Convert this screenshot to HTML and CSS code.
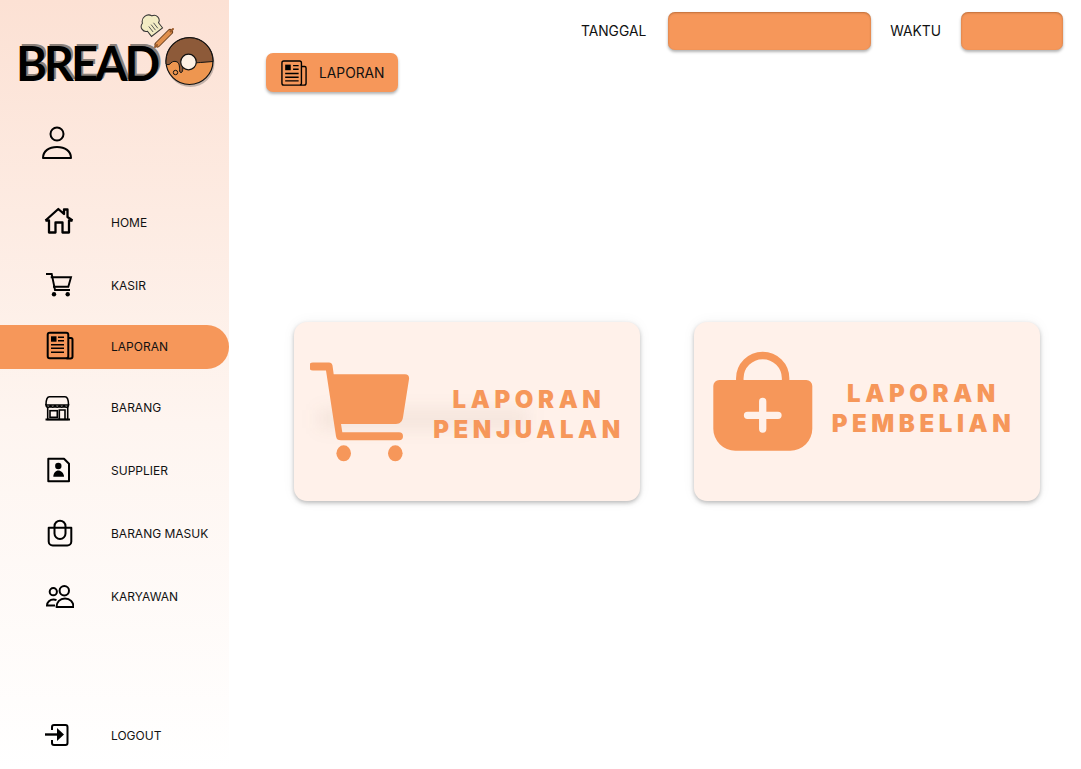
FILE: index.html
```html
<!DOCTYPE html>
<html lang="en">
<head>
  <meta charset="UTF-8">
  <meta name="viewport" content="width=device-width, initial-scale=1.0">
  <title>Bread - Laporan</title>
  <link rel="stylesheet" href="styles.css">
</head>
<body>
  <aside class="sidebar">
    <div class="logo">
      <span class="logo-text">BREAD</span>
      <svg class="logo-art" viewBox="0 0 80 80" width="80" height="80">
        <!-- chef hat + rolling pin -->
        <g transform="rotate(-38 13 16)">
          <path d="M6 16a5 5 0 0 1 1-9.500 6.500 6.500 0 0 1 12 0 5 5 0 0 1 1 9.500v6.500H6z" fill="#f3ecc4" stroke="#333" stroke-width="1"/>
          <path d="M10 13v7M13 13v7M16 13v7" stroke="#555" stroke-width=".9"/>
        </g>
        <path d="M17.500 33.500L30 21" stroke="#6b4020" stroke-width="6" stroke-linecap="round"/>
        <path d="M17.500 33.500L30 21" stroke="#e08f4c" stroke-width="4" stroke-linecap="round"/>
        <path d="M15 36l2-2M30.500 20.500l2.500-2.500" stroke="#9a5a2a" stroke-width="2" stroke-linecap="round"/>
        <!-- donut -->
        <circle cx="50.500" cy="52" r="24" fill="#000" opacity=".22"/>
        <circle cx="49.500" cy="50" r="23.500" fill="#ee9650" stroke="#111" stroke-width="1.200"/>
        <path d="M26 50a23.500 23.500 0 0 1 47 0.500l-10 .8c-4 .3-6 .3-9 1-3 .5-5-.3-7-.3-3 0-3.500 2-4 5-.3 2-.5 4-1.500 4.500-1.500.5-2-1-2-3 0-3 0-7-3.500-8-3-.7-5 1-6 2.500-1 .8-3 1-4 0z" fill="#8d5a39" stroke="#111" stroke-width="1"/>
        <circle cx="35.500" cy="61.500" r="2.200" fill="none" stroke="#111"/>
        <circle cx="48.500" cy="51" r="7.800" fill="#fdf0e4" stroke="#111" stroke-width="1.200"/>
      </svg>
    </div>

    <svg class="user-icon" viewBox="0 0 32 34" width="32" height="34" fill="none" stroke="#000" stroke-width="2">
      <circle cx="16" cy="8" r="6.500"/>
      <path d="M2 32c0-7 6-11 14-11s14 4 14 11z" stroke-linejoin="round"/>
    </svg>

    <nav class="menu">
      <a class="menu-item">
        <svg class="menu-icon" viewBox="0 0 30 30" fill="none" stroke="#000" stroke-width="2.300" stroke-linejoin="round">
          <path d="M1.500 13.500L14.300 2l5.700 5V2.500h3.500V10l5 3.500"/>
          <path d="M1.500 13.500H5v12h6.500v-10h7v10H25v-12h3.500"/>
        </svg>
        HOME
      </a>
      <a class="menu-item">
        <svg class="menu-icon" viewBox="0 0 30 30" fill="none" stroke="#000" stroke-width="1.900">
          <path d="M2 4h5.700L11 20h15"/>
          <path d="M6.700 7.300H27l-2.700 9.400H9"/>
          <circle cx="10" cy="24.300" r="2.200" fill="#000" stroke="none"/>
          <circle cx="23.700" cy="24.300" r="2.200" fill="#000" stroke="none"/>
        </svg>
        KASIR
      </a>
      <a class="menu-item active">
        <svg class="menu-icon" viewBox="0 0 30 30" fill="none" stroke="#000" stroke-width="2">
          <rect x="3.700" y="1.700" width="20.600" height="25.600" rx="2"/>
          <path d="M24.300 7H27a1.500 1.500 0 0 1 1.500 1.500v17a2 2 0 0 1-2 2h-4"/>
          <rect x="7" y="5.300" width="5.500" height="5.400" fill="#000" stroke="none"/>
          <path d="M14 6.300h6M14 9.700h6M7 13.700h13M7 17.300h13M7 21.300h13" stroke-width="1.500"/>
        </svg>
        LAPORAN
      </a>
      <a class="menu-item">
        <svg class="menu-icon" viewBox="0 0 30 30" fill="none" stroke="#000" stroke-width="1.600">
          <path d="M2 13c0-5 1-8.300 3.500-8.300H21c2.500 0 3.500 3.300 3.500 8.300"/>
          <path d="M2 13a2.250 2.250 0 0 0 4.500 0a2.250 2.250 0 0 0 4.500 0a2.250 2.250 0 0 0 4.500 0a2.250 2.250 0 0 0 4.500 0a2.250 2.250 0 0 0 4.500 0z"/>
          <path d="M3.700 15v12.500h20V15"/>
          <path d="M1.500 27.500h24.500" stroke-width="2"/>
          <rect x="6" y="18.700" width="7.300" height="6.600"/>
          <path d="M15.300 27.500V18h5.700v9.500"/>
        </svg>
        BARANG
      </a>
      <a class="menu-item">
        <svg class="menu-icon" viewBox="0 0 30 30" fill="none" stroke="#000" stroke-width="2">
          <path d="M4.300 3.700H20l5 5v17.600H4.300z" stroke-linejoin="round"/>
          <circle cx="14.300" cy="11" r="3.200" fill="#000" stroke="none"/>
          <path d="M9.300 21.700c0-3.700 2.500-6.200 5-6.200s5.700 2.500 5.700 6.200z" fill="#000" stroke="none"/>
        </svg>
        SUPPLIER
      </a>
      <a class="menu-item">
        <svg class="menu-icon" viewBox="0 0 30 30" fill="none" stroke="#000" stroke-width="2">
          <path d="M4.700 9.700h22.600v13.800a4 4 0 0 1-4 4H8.700a4 4 0 0 1-4-4z" stroke-linejoin="round"/>
          <path d="M10.500 8.200a5.500 5.500 0 0 1 11 0v7.300a5.500 5.500 0 0 1-11 0z"/>
        </svg>
        BARANG MASUK
      </a>
      <a class="menu-item">
        <svg class="menu-icon" viewBox="0 0 30 30" fill="none" stroke="#000" stroke-width="2">
          <circle cx="9.300" cy="10.700" r="3.600"/>
          <circle cx="20.300" cy="9.700" r="4.700"/>
          <path d="M11 24.500H3c0-3.500 3-6 6.500-6 1 0 2 .2 3 .6"/>
          <path d="M12.500 26c0-5 3.500-8.500 8.500-8.500s8.500 3.500 8.500 8.500z" stroke-linejoin="round"/>
        </svg>
        KARYAWAN
      </a>
      <a class="menu-item logout">
        <svg class="menu-icon" viewBox="0 0 30 30" fill="none" stroke="#000" stroke-width="2">
          <path d="M8 10V7a2 2 0 0 1 2-2h11.500a2 2 0 0 1 2 2v16a2 2 0 0 1-2 2H10a2 2 0 0 1-2-2v-3"/>
          <path d="M1 14.500h13" stroke-width="2.400"/>
          <path d="M13 8l7 6.500-7 6.500z" fill="#000" stroke="none"/>
        </svg>
        LOGOUT
      </a>
    </nav>
  </aside>

  <main class="content">
    <div class="topbar">
      <span class="top-label">TANGGAL</span>
      <div class="top-field date"></div>
      <span class="top-label">WAKTU</span>
      <div class="top-field time"></div>
    </div>

    <div class="page-title">
      <svg viewBox="0 0 28 28" width="26" height="26" fill="none" stroke="#000" stroke-width="1.500">
        <rect x="1" y="1" width="21" height="26" rx="2"/>
        <path d="M22 7h3.500a1.500 1.500 0 0 1 1.500 1.500V25a2 2 0 0 1-2 2h-4"/>
        <rect x="4.500" y="5" width="6" height="6" fill="#000" stroke="none"/>
        <path d="M13 6h6M13 10h6M4.500 14.500h14.500M4.500 18.500h14.500M4.500 22.500h14.500"/>
      </svg>
      LAPORAN
    </div>

    <div class="cards">
      <a class="card sales">
        <svg class="card-icon" viewBox="0 0 100 100" width="100" height="100" fill="#f6975a">
          <path d="M3 .5h16c2 0 3 1 3.500 3l1.200 8.800H95c3 0 4.500 2 4 5l-6 38c-.6 4-3 6.700-7 6.700H31l1.300 8.300H89a4 4 0 0 1 0 8H31c-3 0-4.500-1-5-4L16 8.500H3a4 4 0 0 1 0-8z"/>
          <ellipse cx="33.700" cy="91.300" rx="7.300" ry="8"/>
          <ellipse cx="85.300" cy="91.300" rx="7.300" ry="8"/>
        </svg>
        <span class="card-title">LAPORAN<br>PENJUALAN</span>
      </a>
      <a class="card buys">
        <svg class="card-icon" viewBox="0 0 100 102" width="100" height="102" fill="none">
          <path d="M26.800 31v-2.700a22.900 22.900 0 0 1 45.800 0V31" stroke="#f6975a" stroke-width="7.500"/>
          <path d="M6 30h87.300a6 6 0 0 1 6 6v42.700a22 22 0 0 1-22 22H22.300a22 22 0 0 1-22-22V36a6 6 0 0 1 6-6z" fill="#f6975a"/>
          <path d="M49.700 51.500V79M34.500 65.300H65" stroke="#fff1ea" stroke-width="7.300" stroke-linecap="round"/>
        </svg>
        <span class="card-title">LAPORAN<br>PEMBELIAN</span>
      </a>
    </div>
  </main>
</body>
</html>
```

FILE: styles.css
```css
:root {
  --orange: #f6975a;
  --card-bg: #fff1ea;
}
* {
  box-sizing: border-box;
}
body {
  font-family: "Inter", "Noto Sans", sans-serif;
  margin: 0;
  width: 1081px;
  height: 769px;
  display: flex;
  background-color: #fff;
  color: #111;
  overflow: hidden;
}
.sidebar {
  width: 229px;
  height: 769px;
  flex-shrink: 0;
  display: flex;
  flex-direction: column;
  background: linear-gradient(180deg, #fce1d4 0%, #fef5f0 55%, #fff 100%);
}
.logo {
  height: 100px;
  padding: 33px 0 0 16px;
  display: flex;
  align-items: flex-start;
  position: relative;
}
.logo-text {
  font-family: "Lato", sans-serif;
  font-size: 47px;
  line-height: 60px;
  font-weight: 700;
  letter-spacing: -3.1px;
  color: #000;
  text-shadow: 2px -2px 0 #8b8079;
}
.logo-art {
  position: absolute;
  left: 140px;
  top: 11px;
}
.user-icon {
  margin: 26px 0 0 41px;
}
.menu {
  flex: 1;
  display: flex;
  flex-direction: column;
  margin-top: 40px;
  padding-bottom: 12px;
}
.menu-item {
  height: 44px;
  margin-bottom: 19px;
  padding: 1px 0 0 44px;
  display: flex;
  align-items: center;
  font-size: 12px;
}
.menu-icon {
  width: 30px;
  height: 30px;
  margin: -1px 37px 0 0;
  flex-shrink: 0;
}
.menu-item.active {
  background-color: var(--orange);
  border-radius: 0 22px 22px 0;
  margin-top: -1px;
  margin-bottom: 16px;
  padding: 0 0 1px 44px;
}
.menu-item.logout {
  margin: auto 0 0;
}
.content {
  flex: 1;
  display: flex;
  flex-direction: column;
}
.topbar {
  display: flex;
  justify-content: flex-end;
  align-items: center;
  padding: 12px 18px 0 0;
}
.top-label {
  font-size: 13.8px;
}
.top-field {
  height: 38px;
  background-color: var(--orange);
  border-radius: 7px;
  box-shadow: 0 2px 3px rgba(0, 0, 0, 0.3), inset 0 1px 2px rgba(120, 60, 20, 0.45);
}
.date {
  width: 203px;
  margin: 0 19px 0 22px;
}
.time {
  width: 102px;
  margin-left: 20px;
}
.page-title {
  width: 132px;
  height: 39px;
  margin: 3px 0 0 37px;
  padding-left: 15px;
  display: flex;
  align-items: center;
  gap: 12px;
  font-size: 13.8px;
  background-color: var(--orange);
  border-radius: 7px;
  box-shadow: 0 2px 3px rgba(0, 0, 0, 0.3);
}
.cards {
  display: flex;
  gap: 54px;
  margin: 230px 0 0 65px;
}
.card {
  width: 346px;
  height: 179px;
  position: relative;
  background-color: var(--card-bg);
  border-radius: 13px;
  box-shadow: 0 2px 4px rgba(0, 0, 0, 0.25), 0 0 14px rgba(0, 0, 0, 0.05);
  display: flex;
  align-items: flex-start;
}
/* soft smudge behind the cart */
.sales::before {
  content: '';
  position: absolute;
  left: 24px;
  top: 88px;
  width: 210px;
  height: 18px;
  background-color: rgba(90, 50, 30, 0.07);
  filter: blur(9px);
}
.card-icon {
  flex-shrink: 0;
  position: relative;
}
.sales .card-icon {
  margin: 40px 0 0 16px;
}
.buys .card-icon {
  margin: 28px 0 0 19px;
}
.card-title {
  flex: 1;
  position: relative;
  text-align: center;
  font-family: "Inter", sans-serif;
  font-weight: 900;
  font-size: 24px;
  line-height: 30px;
  letter-spacing: 4.6px;
  color: var(--orange);
}
.sales .card-title {
  margin-top: 63px;
  padding-left: 8px;
}
.buys .card-title {
  margin-top: 57px;
  padding-right: 6px;
}
```
